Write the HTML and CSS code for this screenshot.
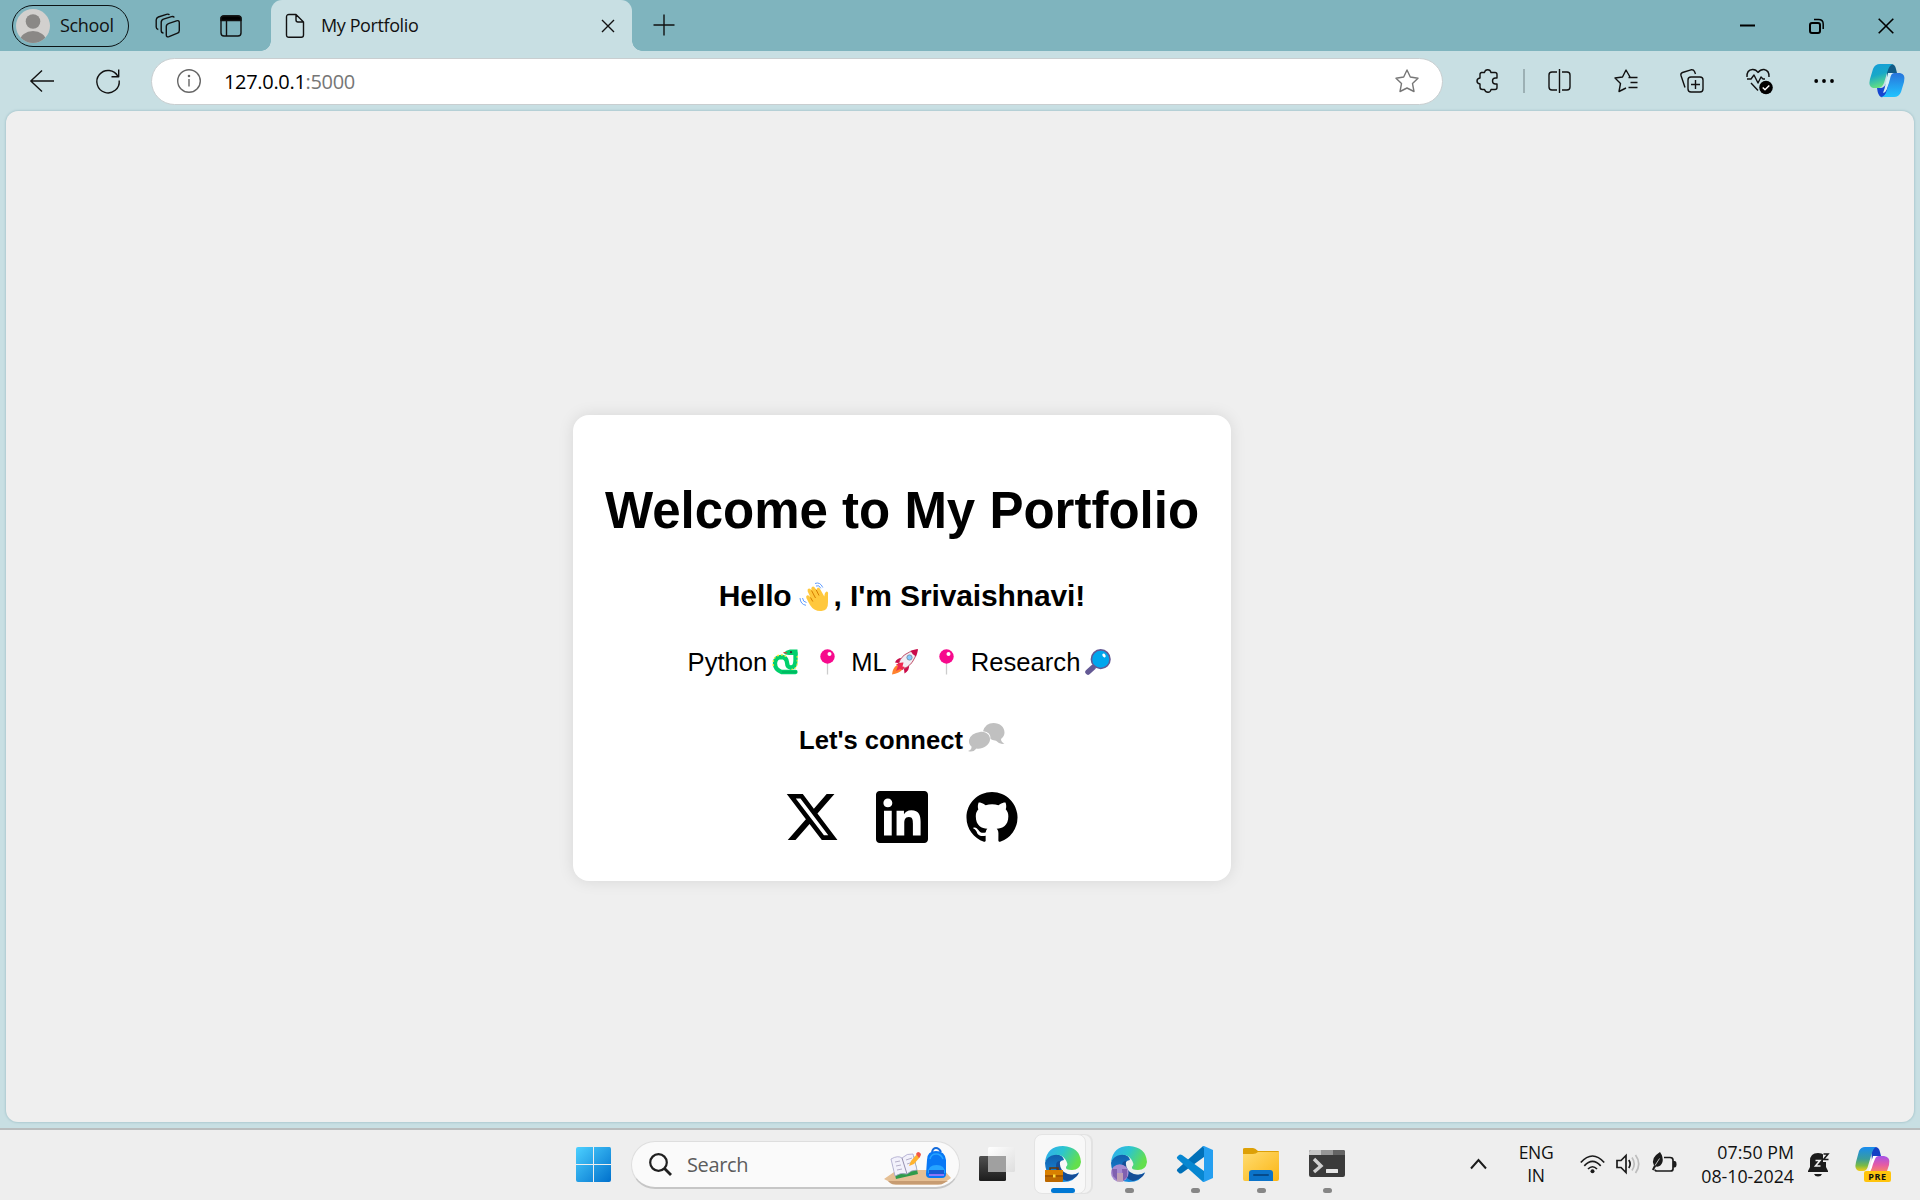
FILE: index.html
```html
<!DOCTYPE html>
<html lang="en">
<head>
<meta charset="utf-8">
<title>My Portfolio</title>
<link rel="stylesheet" href="styles.css">
</head>
<body>
<header class="strip">
  <div class="profile">
    <svg width="34" height="34"><defs><clipPath id="av"><circle cx="17" cy="17" r="17"/></clipPath></defs><g clip-path="url(#av)"><rect width="34" height="34" fill="#d2d0ce"/><circle cx="17" cy="12.500" r="7.300" fill="#8a8886"/><ellipse cx="17" cy="32" rx="13" ry="10" fill="#8a8886"/></g></svg>
    <span>School</span>
  </div>
  <svg class="ic workspaces" width="26" height="26"><path d="M14 10.300L21.500 7.800Q24.300 7 24.300 9.800V17.500Q24.300 19.500 22.500 20.200L14 23.700Q11.300 24.500 11.300 22V13.500Q11.300 11.200 14 10.300Z"/><path d="M8.500 20Q6.200 20 6.200 17.500V9.500Q6.200 7 8.500 6.200L16.500 3.600Q18.500 3 19.300 4.500M3.300 16.500Q1.200 16 1.200 14V7Q1.200 4.800 3.300 4L11.500 1.300Q13.600 .7 14.400 2"/></svg>
  <svg class="ic tabmenu" width="24" height="24"><rect x="2" y="2" width="20" height="20" rx="3"/><path d="M2 4.500Q2 2 5 2H19Q22 2 22 4.500V6.500H2Z" fill="#000"/><path d="M7.500 7V22"/></svg>
  <div class="tab">
    <svg class="ic" width="20" height="26"><path d="M4 1.500H11L18.500 9V22Q18.500 24.300 16.300 24.300H4Q1.500 24.300 1.500 22V4Q1.500 1.500 4 1.500ZM11 1.500V7Q11 9 13 9H18.500"/></svg>
    <span class="tab-title">My Portfolio</span>
    <svg class="ic tab-x" width="14" height="14"><path d="M1 1L13 13M13 1L1 13"/></svg>
  </div>
  <svg class="ic plus" width="22" height="22"><path d="M11 .5V21.500M.5 11H21.500"/></svg>
  <div class="winbtns">
    <svg class="ic bold" width="16" height="16"><path d="M0 7.500H15"/></svg>
    <svg class="ic bold" width="16" height="16"><rect x="1" y="5" width="10" height="10" rx="2"/><path d="M5 1.500H9.500Q14.200 1.500 14.200 6V11" stroke-width="1.500"/></svg>
    <svg class="ic bold" width="16" height="16"><path d="M.7 .7L15.300 15.300M15.300 .7L.7 15.300" stroke-width="1.600"/></svg>
  </div>
</header>
<nav class="toolbar">
  <svg class="ic" width="24" height="24"><path d="M24 12H.8M12 1.500L.8 12L12 22.500"/></svg>
  <svg class="ic reload" width="24" height="24"><path d="M22 7.500A11.200 11.200 0 1 0 23.200 11.500M22.700 .5V7.700H15.500"/></svg>
  <div class="address">
    <svg width="24" height="24" fill="none" stroke="#666" stroke-width="1.400"><circle cx="12" cy="12" r="11.300"/><path d="M12 10V17.500"/><circle cx="12" cy="7" r=".6" fill="#666"/></svg>
    <span class="url">127.0.0.1<span class="port">:5000</span></span>
    <svg class="star" width="24" height="24" fill="none" stroke="#777" stroke-width="1.400" stroke-linejoin="round"><path d="M12 1L15.300 8L23 9.200L17.500 14.600L19 22.500L12 19L5 22.500L6.500 14.600L1 9.200L8.700 8Z"/></svg>
  </div>
  <svg class="ic puzzle" width="24" height="24"><path d="M5 3.500H8.500Q9 .7 11.700 .7T15 3.500H19Q21 3.500 21 5.500V9H19.500Q16.500 9 16.500 12T19.500 15H21V18.500Q21 20.500 19 20.500H15Q14.500 23.300 12 23.300T8.500 20.500H6.500Q4 20.500 4 18V15Q1 14.500 1 12T4 9V5.500Q4 3.500 6 3.500"/></svg>
  <i class="divider"></i>
  <svg class="ic split" width="24" height="24"><path d="M9 3H4Q1 3 1 6V18Q1 21 4 21H9M14 3H19Q22 3 22 6V18Q22 21 19 21H14M11.500 0V24"/></svg>
  <svg class="ic next" width="24" height="24"><path d="M16 8L12 1L8.500 8L1 9L6.500 14.500L5 22.500L12 19M14.500 8.500H23.500M16.500 13.500H23.500M14.500 18.500H23.500"/></svg>
  <svg class="ic next" width="24" height="24"><rect x="8" y="8" width="15" height="15" rx="3"/><path d="M15.500 11V20M11 15.500H20M5 18.500L1 6.500Q.4 4.300 2.500 3.500L11 .8Q13.500 .3 14.500 2.500L15.500 5"/></svg>
  <svg class="ic next" width="28" height="28"><path d="M1 10Q.5 3 6.500 2.500Q10 2.300 12 5.500Q14.500 2.300 18 2.500Q23.500 3.500 23 10M1 12H5L8 8L12 16L15 10L17 12H19M5 16L12 23.500"/><circle cx="20" cy="20.500" r="6.800" fill="#000" stroke="none"/><path d="M16.700 20.500L19 22.800L23.300 18.500" stroke="#fff"/></svg>
  <svg class="dots" width="20" height="6"><circle cx="2.200" cy="3" r="1.900"/><circle cx="10" cy="3" r="1.900"/><circle cx="18" cy="3" r="1.900"/></svg>
  <svg class="copilot" width="36" height="34" viewBox="0 0 36 34"><defs>
    <linearGradient id="c1" x2=".3" y2="1"><stop stop-color="#139cda"/><stop offset=".5" stop-color="#18a8c8"/><stop offset="1" stop-color="#65e080"/></linearGradient>
    <linearGradient id="c2" x2="0" y2="1"><stop stop-color="#2874db"/><stop offset="1" stop-color="#20c4ff"/></linearGradient></defs>
    <path d="M18 0H22Q26 0 27 5L28 9H24Q20 9 18 15Z" fill="#115b86"/>
    <path d="M8 24H12Q16 24 18 17L20 22L17 30Q15 34 12 33Q9 32 8 24Z" fill="#1746d0"/>
    <path d="M11 0H24Q20 1 18 9L15 19Q13 24 9 24H4Q-1 23 1 15L4 5Q6 0 11 0Z" fill="url(#c1)"/>
    <path d="M19 9H25Q22 10 21 15L18 25Q17 28 14 29Q16 24 17 18Z" fill="#d5f0f8"/>
    <path d="M25 9H31Q37 10 35 18L32 28Q30 33 25 33H12Q16 33 18 26L21 15Q22 9 25 9Z" fill="url(#c2)"/>
  </svg>
</nav>
<main class="view">
  <section class="card">
    <h1>Welcome to My Portfolio</h1>
    <h2><span>Hello</span><svg class="wave" width="30" height="30" viewBox="0 0 30 30"><path d="M11 23L7.300 16Q6.700 13.500 8.500 13.200Q9.800 13 11.500 15.500L8.700 9.500Q8 7 9.800 6.500Q11.500 6.200 12.500 8.500L12.300 6.500Q12.500 4.500 14.300 4.500Q15.800 4.800 17 7.500L17.800 8.500Q17.500 5.800 19 5.500Q20.500 5.500 21.500 7.800L25.300 14.500Q25.500 10.500 27.500 9.500Q29.500 9.500 29 12.500V20Q29.300 28.500 22.500 29Q15 29.500 11 23Z" fill="#ffc83d"/><path d="M11.500 15.500L13.800 19.500M12.500 8.500L16.500 16M17 7.500L20 13.500" fill="none" stroke="#d67d00" stroke-width="1"/><path d="M16 1.500Q21 -.5 23.800 5.500M17 4Q20.300 2.500 21.800 6.300M1 16Q1.500 22.500 7 23.300M3.500 16Q4 20 7.500 20.500" fill="none" stroke="#5092ff" stroke-width=".9"/></svg><span class="intro">, I'm Srivaishnavi!</span></h2>
    <p class="skills"><span>Python</span><svg class="emo" width="26" height="26" viewBox="0 0 26 26"><path d="M23.500 4V11Q23.500 18.500 19 18.500Q15.200 18.500 15 13.500Q14.500 8.300 9.500 8Q3 8 3 14.500Q3 20.500 9.500 23H23.500" fill="none" stroke="#00cf6b" stroke-width="4.300" stroke-linecap="round"/><path d="M11.500 4Q14 1 18 .5H25.500V6H17Q13 6 11.500 4Z" fill="#00cf6b"/><path d="M10 23H25" stroke="#00a65a" stroke-width="1"/><path d="M1.300 17Q0 9 6 6.500Q12 4.800 15 8.500" fill="none" stroke="#ffe63c" stroke-width="1.400" stroke-dasharray="1.800 2"/><path d="M25.200 7V15Q24.500 20 19.500 20.300" fill="none" stroke="#ffe63c" stroke-width="1.200" stroke-dasharray="1.800 2"/><circle cx="19" cy="3.200" r="1.100" fill="#333"/><path d="M11.500 3.500L15 4" stroke="#f8312f" stroke-width="1.200"/></svg>
    <svg class="pin" width="15" height="26"><path d="M7.500 14V25.500" stroke="#ccc" stroke-width="1.300"/><circle cx="7.500" cy="7.500" r="7.200" fill="#f70a8d"/><circle cx="9.500" cy="5" r="2" fill="#fff"/></svg>
    <span>ML</span><svg class="emo" width="26" height="26" viewBox="0 0 26 26"><path d="M0 25.500Q.5 19 5 16L10 21Q7 24 0 25.500Z" fill="#ff822d"/><path d="M3 13.500Q5 8.500 10.500 9L17 15.500Q18 21 12.500 24.500L12 20L6 14Z" fill="#ca0b4a"/><path d="M6 16Q9 3.500 25 1Q22.500 16.500 10 20.500Z" fill="#f1edf3" stroke="#ba3c58" stroke-width=".9"/><path d="M18.500 1.800Q22 .4 26 0Q25.500 4 24 7.500Q20 5.500 18.500 1.800Z" fill="#ca0b4a"/><path d="M4 15.500Q8 13 11.500 13.500L10.500 17.500L13 18L10 21L8 20L4 22L6 17Z" fill="#ef2950"/><circle cx="17.500" cy="8.500" r="2.600" fill="#83cbff" stroke="#7993ae"/></svg>
    <svg class="pin second" width="15" height="26"><path d="M7.500 14V25.500" stroke="#ccc" stroke-width="1.300"/><circle cx="7.500" cy="7.500" r="7.200" fill="#f70a8d"/><circle cx="9.500" cy="5" r="2" fill="#fff"/></svg>
    <span>Research</span><svg class="emo" width="26" height="26"><path d="M3 23L8 18.500" stroke="#635994" stroke-width="5.500" stroke-linecap="round"/><path d="M8 18L11 15" stroke="#635994" stroke-width="2"/><circle cx="15.700" cy="10.200" r="9.300" fill="#00a6ed" stroke="#635994" stroke-width="1.600"/><ellipse cx="19" cy="6.500" rx="1.500" ry="2" transform="rotate(-35 19 6.500)" fill="#fff"/></svg></p>
    <h3><span>Let's connect</span><svg class="bubbles" width="37" height="29" viewBox="0 0 37 29" fill="#c0c0c0"><path d="M25.500 0C32 0 36.500 4 36.500 9.500Q36.500 13 33 16Q33 19 36.500 20.500Q32 22 28 17.800Q24 17 22.500 16Q23 9 15 8.200Q17.500 0 25.500 0Z"/><path d="M12 9C18 8 22.500 12 22 17C21 23 14 26.500 8.500 25.500Q5 30 0 28Q4 26.500 3.500 23.500Q.5 21 1 17Q3 10 12 9Z"/></svg></h3>
    <div class="links">
      <svg width="52" height="52" viewBox="20 21 472 470"><path d="M389.200 48h70.600L305.600 224.200 487 464H345L233.700 318.600 106.500 464H35.800L200.700 275.500 26.800 48H172.400L272.900 180.900 389.200 48zM364.400 421.800h39.100L151.100 88h-42L364.400 421.800z"/></svg>
      <svg width="52" height="52" viewBox="0 32 448 448"><path d="M416 32H31.900C14.300 32 0 46.500 0 64.300v383.400C0 465.500 14.300 480 31.900 480H416c17.600 0 32-14.500 32-32.300V64.300c0-17.800-14.400-32.300-32-32.300zM135.400 416H69V202.200h66.500V416zm-33.200-243c-21.300 0-38.500-17.300-38.500-38.500S80.900 96 102.200 96c21.200 0 38.500 17.300 38.500 38.500 0 21.300-17.200 38.500-38.500 38.500zm282.100 243h-66.400V312c0-24.800-.5-56.700-34.500-56.700-34.600 0-39.900 27-39.900 54.900V416h-66.400V202.200h63.700v29.200h.9c8.900-16.800 30.600-34.500 62.900-34.500 67.200 0 79.700 44.300 79.700 101.900V416z"/></svg>
      <svg width="52" height="52" viewBox="-.15 -.3 16.300 16.300"><path d="M8 0C3.580 0 0 3.580 0 8c0 3.540 2.290 6.530 5.470 7.590.4.070.55-.17.55-.38 0-.19-.01-.82-.01-1.490-2.010.37-2.530-.49-2.690-.94-.09-.23-.48-.94-.82-1.130-.28-.15-.68-.52-.01-.53.63-.01 1.080.58 1.230.82.72 1.210 1.870.87 2.330.66.070-.52.280-.87.510-1.070-1.780-.2-3.640-.89-3.640-3.950 0-.87.310-1.590.820-2.150-.08-.2-.36-1.020.080-2.120 0 0 .67-.21 2.200.82.640-.18 1.320-.27 2-.27s1.360.090 2 .27c1.530-1.040 2.200-.82 2.200-.82.440 1.100.160 1.920.080 2.120.510.560.820 1.270.820 2.150 0 3.070-1.870 3.750-3.650 3.950.290.250.540.730.540 1.480 0 1.070-.01 1.930-.01 2.200 0 .210.150.460.550.380A8.010 8.010 0 0 0 16 8c0-4.420-3.580-8-8-8z"/></svg>
    </div>
  </section>
</main>
<footer class="taskbar">
  <svg class="start" width="36" height="36"><defs><linearGradient id="w1" x2="1" y2="1"><stop stop-color="#4cd0ff"/><stop offset="1" stop-color="#0070cc"/></linearGradient></defs><path d="M2 0H17V17H0V2Q0 0 2 0ZM18 0H33.500Q35 0 35 2V17H18ZM0 18H17V35H2Q0 35 0 33ZM18 18H35V33Q35 35 33 35H18Z" fill="url(#w1)"/></svg>
  <div class="search">
    <svg width="23" height="23" fill="none" stroke="#1f1f1f" stroke-width="2.200"><circle cx="9.500" cy="9.500" r="8.300"/><path d="M15.500 15.500L22 22" stroke-width="2.800"/></svg>
    <span>Search</span>
    <svg class="art" width="68" height="38" viewBox="0 0 68 38"><path d="M0 32L13 23H60L67 31L60 36Q58 37.500 54 37.500H12Q8 37.500 6 35Z" fill="#e5bf94"/><path d="M4 34H64L60 36Q58 37.500 54 37.500H12Q8 37.500 6 36Z" fill="#c79c72"/><path d="M8 15L30 9L34 27L12 32Z" fill="#2f9b4b"/><path d="M7 12Q14 8 18 11Q23 6 29 7L33 23Q27 23 23 27Q17 25 11 29Z" fill="#f2f1fb" stroke="#aaa6cc" stroke-width=".8"/><path d="M18 11L23 27" stroke="#9690ae" stroke-width="1"/><path d="M11 15L16 14M12 19L17 18M13 23L18 22M22 13L28 11M23 17L29 15" stroke="#b5b0c8" stroke-width="1"/><path d="M25 19L27 14L33 7L36 10L30 17Z" fill="#ffb32f"/><path d="M32 7Q34 3 37 7Q37 9 35 11Z" fill="#f25646"/><path d="M48 5Q49 1 52 1T57 5" fill="none" stroke="#146bdb" stroke-width="2"/><path d="M43 13Q43 4 52 4T62 13V27Q62 31 58 31H46Q42 31 42 27Z" fill="#0878f5"/><path d="M46 12Q47 7 52 7T59 12" fill="none" stroke="#24a3ff" stroke-width="1.500"/><path d="M44 26Q44 18 52.500 18T61 26" fill="#26a4ff"/><path d="M45 23H60V28H45Z" fill="#1759d2"/><path d="M45 28H60" stroke="#b47cff" stroke-width="1.500"/></svg>
  </div>
  <svg class="taskview" width="37" height="35"><defs><linearGradient id="t1" x2="0" y2="1"><stop stop-color="#505050"/><stop offset="1" stop-color="#1c1c1c"/></linearGradient><linearGradient id="t2" x2="1" y2="1"><stop stop-color="#fff"/><stop offset="1" stop-color="#dedede"/></linearGradient></defs><rect y="9" width="27" height="25" rx="1.500" fill="url(#t1)"/><rect x="9" width="27" height="25" rx="1.500" fill="url(#t2)"/><path d="M9 9H27V25H9Z" fill="#a0a0a0"/></svg>
  <div class="app edge active">
    <svg width="36" height="36" viewBox="0 0 36 36"><defs>
      <linearGradient id="e1" x2="1" y2=".4"><stop stop-color="#31a9f4"/><stop offset=".5" stop-color="#2cc5cf"/><stop offset="1" stop-color="#63df4d"/></linearGradient>
      <linearGradient id="e2" x2="0" y2="1"><stop stop-color="#125eab"/><stop offset="1" stop-color="#168ee0"/></linearGradient>
      <g id="edge"><path d="M0 17Q1 8 11 8Q18 9 19 14Q13 15 14 21Q16 29 25 29Q31 29 34 26Q30 36 18 36Q1 35 0 17Z" fill="url(#e2)"/><path d="M11 20Q10 31 22 35Q31 33 34 27Q26 31 19 26Q14 22 15 15Q11 15 11 20Z" fill="#154d97"/><path d="M0 16Q2 0 18 0Q35 1 36 16Q35 24 27 24Q20 24 21 21Q24 18 20 13Q16 8 9 9Q3 10 0 16Z" fill="url(#e1)"/></g></defs>
      <use href="#edge"/><path d="M5 24V22H13V24" fill="none" stroke="#6a3405" stroke-width="1.500"/><rect y="24" width="18" height="12" rx="1" fill="#bd6900"/><path d="M0 24H18V29H0Z" fill="#d98000"/><path d="M0 30H18" stroke="#8d4700"/><rect x="8" y="28.500" width="2.500" height="3" fill="#ffe03c"/></svg>
    <i class="mark"></i>
  </div>
  <div class="app"><svg width="36" height="36" viewBox="0 0 36 36"><use href="#edge"/><circle cx="8.800" cy="27" r="8.800" fill="#a78bd1"/><path d="M1 23H6V34L2 30ZM11 23H16V31L12 35Z" fill="#8060b0"/><path d="M6 27H12V35.500H6Z" fill="#bfa0b5"/></svg><i class="mark"></i></div>
  <div class="app"><svg width="36" height="36" viewBox="0 0 36 36"><path d="M27 0V11L5 27Q3 28 2 27L0 25Q-.5 24 .5 23L25 1Z" fill="#0070b8"/><path d="M27 36V25L5 9Q3 8 2 9L0 11Q-.5 12 .5 13L25 35Z" fill="#0787d1"/><path d="M25 .5Q26 0 27 0L36 4V32L27 36Q26 36 25 35L27 34V2Z" fill="#259ff0"/></svg><i class="mark"></i></div>
  <div class="app"><svg width="36" height="36" viewBox="0 0 36 36"><defs><linearGradient id="f1" x2="1" y2="1"><stop stop-color="#ffdc70"/><stop offset="1" stop-color="#fbb514"/></linearGradient></defs><path d="M0 3Q0 2 2 2H10Q12 2 15 5H35Q36 5 36 6V14H0Z" fill="#dda006"/><path d="M0 8H10Q13 8 15 6H36V33Q36 35 34 35H2Q0 35 0 33Z" fill="url(#f1)"/><path d="M6 35V27Q6 24 9 24H27Q30 24 30 27V35Z" fill="#0b73c9"/><path d="M11 29H25" stroke="#064a8a" stroke-width="2" stroke-linecap="round"/></svg><i class="mark"></i></div>
  <div class="app"><svg width="36" height="36" viewBox="0 0 36 36"><rect y="4" width="36" height="27" rx="2" fill="#3b3b3b"/><path d="M0 9V6Q0 4 2 4H12V9Z" fill="#c6c6c6"/><path d="M12 4H24V9H12Z" fill="#969696"/><path d="M24 4H34Q36 4 36 6V9H24Z" fill="#646464"/><path d="M5 13L12 20L5 26" fill="none" stroke="#d0d0d0" stroke-width="3.400"/><rect x="17" y="23" width="12" height="4" rx=".5" fill="#e6e6e6"/></svg><i class="mark"></i></div>
  <div class="tray">
    <svg class="tr" width="17" height="12"><path d="M1 10.500L8.500 2L16 10.500" stroke-width="2"/></svg>
    <div class="lang">ENG<br>IN</div>
    <svg class="tr" width="25" height="20"><path d="M.8 8.500Q12.500 -4.500 24.200 8.500M4.300 11.800Q12.500 3 20.700 11.800M8 15Q12.500 10.500 17 15"/><circle cx="12.500" cy="17.200" r="2" fill="#1b1b1b" stroke="none"/></svg>
    <svg class="tr speaker" width="25" height="20"><path d="M1 6.500H5L10 1.500V18.500L5 13.500H1ZM12.800 6Q15.500 10 12.800 14"/><path d="M16 3.500Q20.500 10 16 16.500M19.500 1Q26 10 19.500 19" stroke="#bdbdbd"/></svg>
    <svg class="tr battery" width="25" height="21"><path d="M12 5.500H18Q21 5.500 21 8V17Q21 19 18.500 19H5Q3 19 3 17.500"/><path d="M21 9H22.500Q24.500 9 24.500 12.200T22.500 15.500H21Z" fill="#1b1b1b" stroke="none"/><path d="M8 0Q11.500 5 10.500 10Q8.500 15.500 4 14.500L1.500 18.500L0 17.500L2 13.500Q-2 6 8 0Z" fill="#1b1b1b" stroke="none"/><path d="M3 13.500L7.500 6.500" stroke="#eee" stroke-width=".8"/></svg>
    <div class="clock">07:50 PM<br>08-10-2024</div>
    <svg class="bell" width="23" height="25" viewBox="0 0 23 25"><path d="M0 19L2 15V9Q2 1 10 1Q18 1 18 9V15L20 19V20H0ZM6 22H14Q13 24.500 10 24.500T6 22Z" fill="#1b1b1b"/><path d="M15 0H23V10H15Z" fill="#eee"/><path d="M7.500 8.500H12L7.500 14H12.500" fill="none" stroke="#eee" stroke-width="1.600"/><path d="M15.500 2H20L15.500 7.500H20.500" fill="none" stroke="#1b1b1b" stroke-width="1.600"/></svg>
    <div class="pre">
      <svg width="36" height="35" viewBox="0 0 36 35"><defs><linearGradient id="p1" x2="0" y2="1"><stop stop-color="#188bf0"/><stop offset=".5" stop-color="#3a9d9c"/><stop offset=".78" stop-color="#7cbb42"/><stop offset="1" stop-color="#f7cc18"/></linearGradient><linearGradient id="p2" x2="0" y2="1"><stop stop-color="#a552e8"/><stop offset=".5" stop-color="#e65ba4"/><stop offset="1" stop-color="#ff9350"/></linearGradient></defs><path d="M16 0H20Q24 0 25 5L26 9H22Q18 9 17 14Z" fill="#143fc4"/><path d="M10 0H21Q18 1 16 9L13 19Q12 24 8 24H4Q-1 23 1 15L4 4Q6 0 10 0Z" fill="url(#p1)"/><path d="M18 9H24Q21 10 20 14L18 20Q16 25 13 26Q15 21 16 16Z" fill="#fff"/><path d="M24 9H29Q36 10 34 18L31 27H13Q16 25 18 17L20 12Q21 9 24 9Z" fill="url(#p2)"/></svg>
      <b>PRE</b>
    </div>
  </div>
</footer>
</body>
</html>
```
FILE: styles.css
```css
* { box-sizing: border-box; }
body {
  margin: 0;
  width: 1920px;
  height: 1200px;
  overflow: hidden;
  display: flex;
  flex-direction: column;
  background: #c8dfe3;
  font-family: "Open Sans", "Noto Sans", sans-serif;
  color: #111;
}
svg { display: block; flex: none; overflow: visible; }
.ic { fill: none; stroke: #111; stroke-width: 1.4; stroke-linejoin: round; }
.bold { stroke: #000; stroke-width: 2; }

.strip { height: 51px; flex: none; display: flex; align-items: center; background: #7fb4be; padding-left: 12px; }
.profile {
  width: 117px; height: 42px;
  border: 1.5px solid #0b1416; border-radius: 21px;
  display: flex; align-items: center; gap: 10px; padding-left: 3px;
  font-size: 18px; letter-spacing: -.35px;
}
.profile span { margin-top: -1px; }
.workspaces { margin-left: 26px; }
.tabmenu { margin-left: 38px; }
.tab {
  position: relative;
  width: 361px; height: 51px; margin-left: 28px; padding-left: 14px;
  display: flex; align-items: center;
  background: #c8dfe3; border-radius: 11px 11px 0 0;
}
.tab::before, .tab::after { content: ""; position: absolute; bottom: 0; width: 10px; height: 10px; }
.tab::before { left: -10px; background: radial-gradient(circle at 0 0, #7fb4be 9.5px, #c8dfe3 10px); }
.tab::after { right: -10px; background: radial-gradient(circle at 100% 0, #7fb4be 9.5px, #c8dfe3 10px); }
.tab-title { margin: -1px 0 0 16px; width: 280px; font-size: 18px; letter-spacing: -.4px; }
.plus { margin: -1px 0 0 21px; }
.winbtns { display: flex; gap: 53px; margin: 0 26px 0 auto; }

.toolbar { height: 60px; flex: none; display: flex; align-items: center; padding-left: 30px; }
.reload { margin-left: 42px; }
.address {
  width: 1292px; height: 47px; margin-left: 31px;
  border: 1px solid #c9ced0; border-radius: 24px; background: #fff;
  display: flex; align-items: center; padding: 0 23px 0 25px;
}
.url { margin-left: 23px; font-size: 20px; letter-spacing: -.32px; color: #000; }
.port { color: #767676; }
.star { margin-left: auto; }
.puzzle { margin-left: 33px; }
.divider { width: 2px; height: 24px; margin: 0 23px; background: #9cb0b4; }
.next { margin-left: 42px; }
.dots { margin-left: 40px; }
.copilot { margin-left: 35px; }

.view {
  width: 1908px; height: 1011px; flex: none; margin-left: 6px;
  border-radius: 12px; background: #efefef;
  box-shadow: 0 0 2px 1px #aecbd1;
  padding: 303.5px 0 0 567px;
}
.card {
  width: 658px; height: 466.5px; padding-top: 66.500px;
  border-radius: 16px; background: #fff;
  box-shadow: 0 0 16px rgba(0, 0, 0, .1);
  font-family: "Liberation Sans", Arial, sans-serif; color: #000;
}
h1, h2, h3, p { margin: 0; display: flex; justify-content: center; white-space: pre; }
h1 { font-size: 51px; line-height: 60px; }
h2 { font-size: 30px; line-height: 36px; margin-top: 37px; letter-spacing: -.12px; }
.wave { margin: 4px 5px 0 7px; }
.skills { margin-top: 33px; padding-right: 5px; font-size: 25.6px; line-height: 30px; }
.emo { margin: 2px 0 0 5px; }
.pin { margin: 2px 16px 0 22px; }
.pin.second { margin: 2px 17px 0 21px; }
h3 { margin-top: 48px; font-size: 25.6px; line-height: 30px; }
.bubbles { margin: -2px 0 0 5px; }
.links { display: flex; justify-content: center; gap: 38px; margin-top: 36px; }

.taskbar {
  height: 72px; flex: none; margin-top: 6px;
  border-top: 2px solid #b9bdbe; background: #eee;
  display: flex; align-items: center; padding-left: 576px;
}
.search {
  width: 329px; height: 48px; margin-left: 19px; margin-top: -1px;
  border: 1.5px solid #dedede; border-bottom: 2px solid #c6c6c6; border-radius: 24px;
  background: #fafafa; color: #5c5c5c; font-size: 20px; letter-spacing: -.35px;
  display: flex; align-items: center; padding: 0 7px 0 17px;
}
.search span { margin-left: 15px; }
.art { margin-left: auto; margin-top: 4px; }
.taskview { margin: -2px 0 0 19px; }
.app { position: relative; width: 36px; height: 60px; margin: -2px 30px 0 0; display: flex; align-items: center; }
.app.edge {
  width: 52px; margin: -2px 25px 0 18px; padding-left: 10px;
  border: 1.5px solid #e4e4e4; border-radius: 8px; background: #f8f8f8;
  box-shadow: 6px 0 0 -1px #f3f3f3, 7px 0 0 0 #e2e2e2;
}
.mark { position: absolute; left: 14px; bottom: 1px; width: 9px; height: 5px; border-radius: 3px; background: #868686; }
.active .mark { left: 16px; bottom: 0; width: 24px; background: #0078d4; }
.tray { display: flex; align-items: center; margin: -2px 0 0 auto; padding-right: 29px; }
.tr { fill: none; stroke: #1b1b1b; stroke-width: 1.7; }
.lang { width: 60px; margin: 0 14px 0 19px; text-align: center; font-size: 17.5px; line-height: 23px; letter-spacing: -.4px; }
.speaker { margin-left: 11px; }
.battery { margin: -3px 0 0 11px; }
.clock { width: 117px; text-align: right; font-size: 17.8px; line-height: 24px; white-space: nowrap; margin-top: -1px; }
.bell { margin-left: 14px; }
.pre { position: relative; margin-left: 24px; }
.pre b { position: absolute; right: 0; bottom: 0; width: 27px; height: 11px; border-radius: 2px; background: #ffc40d; font-size: 9px; line-height: 11px; text-align: center; letter-spacing: .7px; }
```
